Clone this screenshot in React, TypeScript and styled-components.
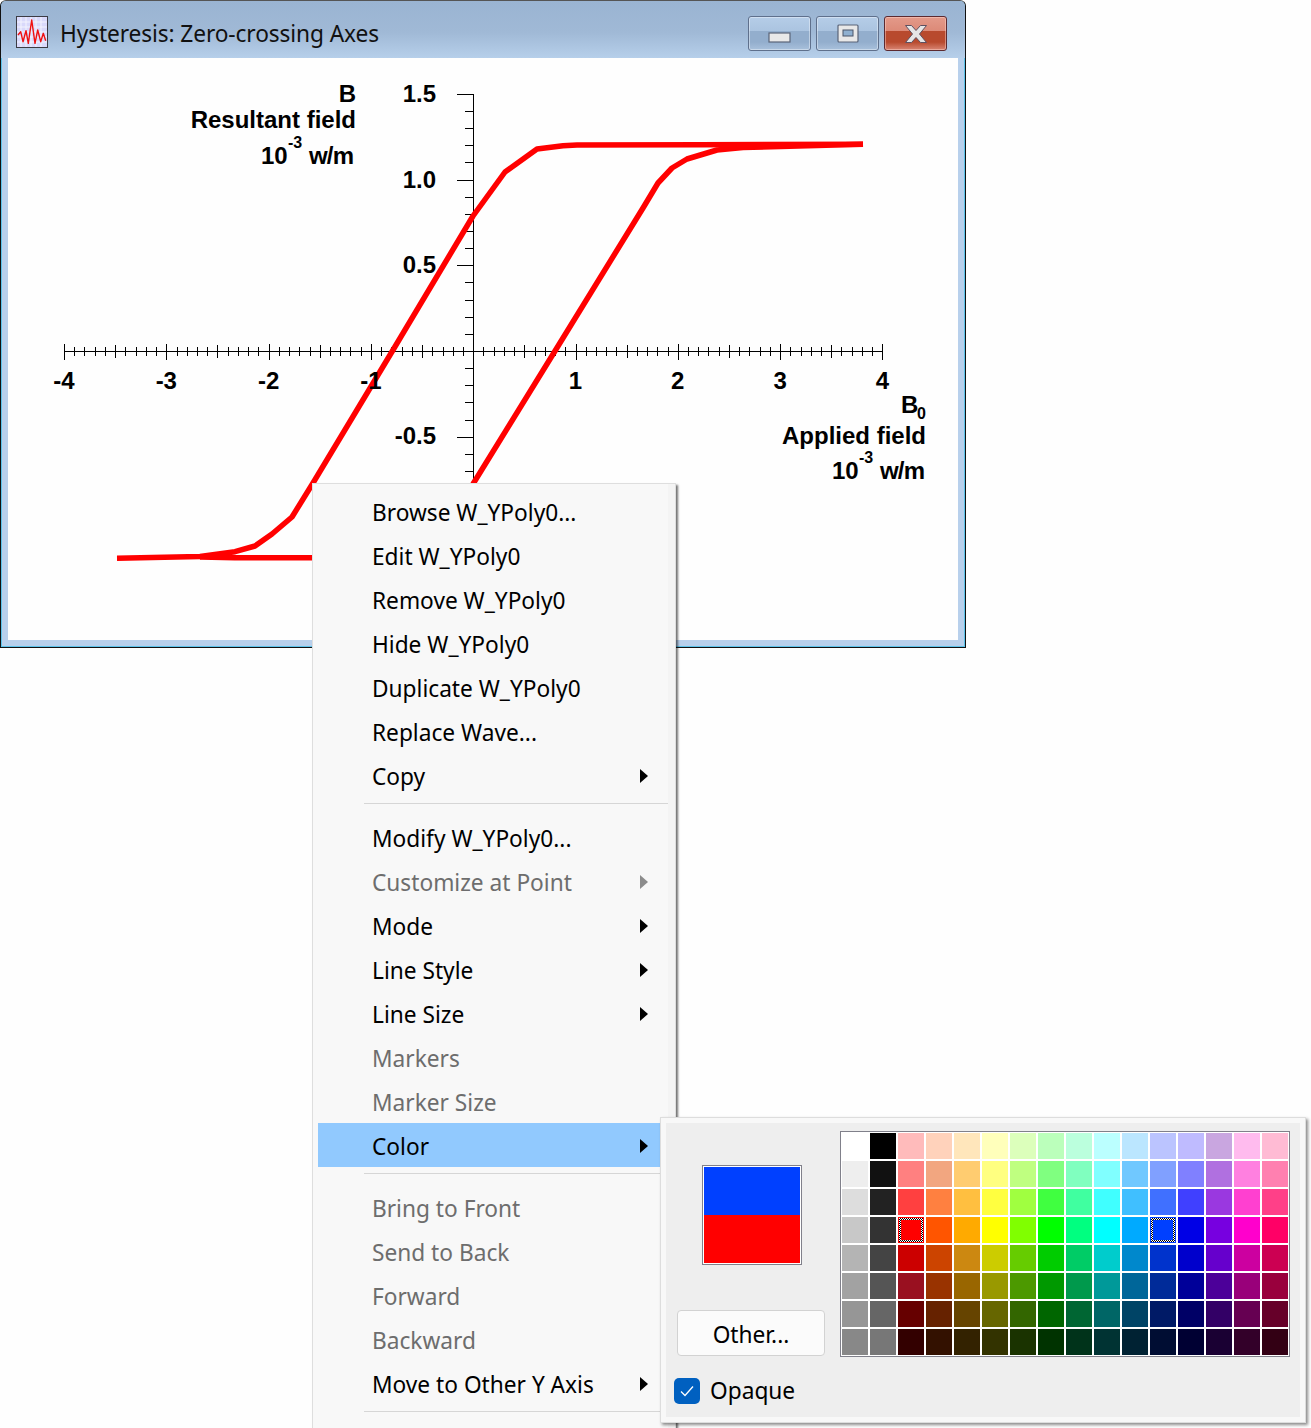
import styled, { createGlobalStyle } from 'styled-components';

const GlobalStyle = createGlobalStyle`
  html, body {
    margin: 0;
    padding: 0;
    background: #ffffff;
  }
`;

const uiFont = `"Noto Sans", "Open Sans", sans-serif`;

const Desktop = styled.div`
  position: relative;
  width: 1311px;
  height: 1428px;
  overflow: hidden;
  background: #fefefe;
  font-family: ${uiFont};
`;

/* graph window */
const Window = styled.div`
  position: absolute;
  left: 0;
  top: 0;
  width: 966px;
  height: 648px;
  box-sizing: border-box;
  display: flex;
  flex-direction: column;
  border: 1px solid #111;
  border-top-color: #555;
  border-radius: 6px 6px 0 0;
  box-shadow: inset 0 0 0 1px #5cc3ea;
  background: #b8d0ec;
  padding: 0 7px 7px;
`;

const TitleBar = styled.div`
  flex: none;
  height: 57px;
  box-sizing: border-box;
  margin: 0 -7px;
  padding: 15px 18px 0 15px;
  display: flex;
  align-items: flex-start;
  border-radius: 5px 5px 0 0;
  background: linear-gradient(#9ab4d2, #a0b9d6 55%, #b6cfea);
`;

const TitleIcon = styled.svg`
  flex: none;
  width: 32px;
  height: 32px;
  margin-right: 12px;
`;

const TitleText = styled.div`
  flex: 1;
  font-size: 22.7px;
  line-height: 35px;
  letter-spacing: -0.1px;
  color: #111;
  white-space: nowrap;
`;

const CaptionButtons = styled.div`
  display: flex;
  gap: 5px;
`;

const CaptionButton = styled.div<{ $close?: boolean }>`
  width: 63px;
  height: 35px;
  box-sizing: border-box;
  display: flex;
  align-items: center;
  justify-content: center;
  border: 1px solid ${p => (p.$close ? '#5c2a30' : '#5f708c')};
  border-radius: 3px;
  box-shadow: inset 0 0 0 1px ${p => (p.$close ? 'rgba(255,220,210,.45)' : 'rgba(235,242,250,.5)')};
  background: ${p =>
    p.$close
      ? 'linear-gradient(#e39a8a 0, #dc8a78 42%, #b84a2e 42%, #b84a2e 76%, #d98674 100%)'
      : 'linear-gradient(#b5cde8 0, #abc4e0 42%, #93aecd 42%, #93aecd 76%, #a9c1dc 100%)'};
`;

const Client = styled.div`
  flex: 1;
  min-height: 0;
  background: #fefefe;
`;

const Plot = styled.svg`
  display: block;
  width: 950px;
  height: 582px;
`;

const Label = styled.text`
  font-family: "Liberation Sans", Arial, sans-serif;
  font-weight: 700;
  font-size: 24px;
  fill: #000;
`;

const Exponent = styled(Label)`
  font-size: 16px;
`;

/* context menu */
const Menu = styled.div`
  position: absolute;
  left: 312px;
  top: 483px;
  width: 364px;
  height: 960px;
  box-sizing: border-box;
  padding: 5px 7px 0 5px;
  border: 1px solid #dedede;
  background: linear-gradient(90deg, #f8f8f8 calc(100% - 7px), #f4f4f4 0);
  box-shadow: 2px 2px 2px rgba(0, 0, 0, 0.55);
`;

const MenuItem = styled.div<{ $disabled?: boolean; $active?: boolean }>`
  height: 44px;
  display: flex;
  align-items: center;
  padding: 0 20px 0 54px;
  font-size: 22.7px;
  white-space: nowrap;
  color: ${p => (p.$disabled ? '#6d6d6d' : '#000')};
  background: ${p => (p.$active ? '#91c9fe' : 'transparent')};
`;

const MenuLabel = styled.span`
  flex: 1;
  position: relative;
  top: 1px;
`;

const Arrow = styled.span<{ $disabled?: boolean }>`
  width: 0;
  height: 0;
  margin-top: 1px;
  border-left: 8px solid ${p => (p.$disabled ? '#8c8c8c' : '#000')};
  border-top: 7px solid transparent;
  border-bottom: 7px solid transparent;
`;

const Separator = styled.div`
  height: 1px;
  margin: 6px 0 11px 46px;
  background: #d6d6d6;
`;

/* colour popup */
const ColorPopup = styled.div`
  position: absolute;
  left: 660px;
  top: 1117px;
  width: 646px;
  height: 306px;
  box-sizing: border-box;
  padding: 5px;
  border: 1px solid #dddddd;
  background: #f8f8f8;
  box-shadow: 2px 2px 3px rgba(0, 0, 0, 0.45);
`;

const PopupBody = styled.div`
  height: 100%;
  box-sizing: border-box;
  display: flex;
  padding: 8px 0 0 8px;
  background: #eeeeee;
`;

const PopupSide = styled.div`
  flex: none;
  width: 166px;
  display: flex;
  flex-direction: column;
  align-items: flex-start;
`;

const Preview = styled.div`
  width: 100px;
  height: 100px;
  box-sizing: border-box;
  margin: 34px 0 45px 28px;
  border: 1px solid #80808a;
  outline: 1px solid #fff;
  outline-offset: -2px;
  background: linear-gradient(#0040ff 0 50%, #ff0000 50% 100%);
`;

const OtherButton = styled.div`
  width: 148px;
  height: 46px;
  box-sizing: border-box;
  margin-left: 3px;
  padding-top: 2px;
  display: flex;
  align-items: center;
  justify-content: center;
  border: 1px solid #d2d2d2;
  border-radius: 4px;
  background: #fbfbfb;
  font-size: 22.7px;
  color: #000;
`;

const OpaqueRow = styled.div`
  display: flex;
  align-items: center;
  gap: 10px;
  margin-top: 19px;
  font-size: 22.7px;
  color: #000;
`;

const OpaqueLabel = styled.span`
  position: relative;
  top: 0;
`;

const CheckBox = styled.div`
  width: 26px;
  height: 26px;
  display: flex;
  align-items: center;
  justify-content: center;
  border-radius: 5px;
  background: #0060c0;
`;

const Palette = styled.div`
  flex: none;
  align-self: flex-start;
  box-sizing: border-box;
  width: 450px;
  height: 226px;
  padding: 1px 0 0 1px;
  display: grid;
  grid-template-columns: repeat(16, 26px);
  grid-auto-rows: 26px;
  gap: 2px;
  border: 1px solid #80808a;
  background: #fff;
`;

const Swatch = styled.div<{ $color: string; $selected?: boolean }>`
  position: relative;
  background: ${p => p.$color};

  ${p =>
    p.$selected &&
    `
    &::before {
      content: '';
      position: absolute;
      inset: 1px;
      background: repeating-conic-gradient(#000 0 25%, #fff 0 50%) 0 0 / 2px 2px;
    }
    &::after {
      content: '';
      position: absolute;
      inset: 3px;
      background: ${p.$color};
    }
  `}
`;

const palette = [
  ['#ffffff', '#000000', '#ffbbbb', '#ffd2bb', '#ffe6bb', '#ffffbb', '#dcffbb', '#bbffbb', '#bbffdd', '#bbffff', '#bbe6ff', '#bbc4ff', '#bfbbff', '#c9a6e0', '#ffbbee', '#ffbbd4'],
  ['#eeeeee', '#111111', '#ff8080', '#f2a680', '#ffcc70', '#ffff80', '#bfff80', '#80ff80', '#80ffbf', '#80ffff', '#70c8ff', '#80a0ff', '#8080ff', '#b070e0', '#ff80e0', '#ff80b0'],
  ['#dddddd', '#222222', '#ff4040', '#ff8040', '#ffbf40', '#ffff40', '#a0ff40', '#40ff40', '#40ffa0', '#40ffff', '#40bfff', '#4070ff', '#4040ff', '#9a38e0', '#ff40d0', '#ff4088'],
  ['#c8c8c8', '#333333', '#ff0000', '#ff5500', '#ffaa00', '#ffff00', '#80ff00', '#00ff00', '#00ff80', '#00ffff', '#00aaff', '#0040ff', '#0000e6', '#7700e0', '#ff00cc', '#ff0066'],
  ['#b4b4b4', '#444444', '#cc0000', '#cc4400', '#cc8811', '#cccc00', '#66cc00', '#00cc00', '#00cc66', '#00cccc', '#0088cc', '#0033cc', '#0000cc', '#6600cc', '#cc00a0', '#cc0052'],
  ['#a2a2a2', '#555555', '#991020', '#993300', '#996600', '#999900', '#4c9900', '#009900', '#00994c', '#009999', '#006699', '#002b99', '#000099', '#4c0099', '#99007a', '#99003d'],
  ['#969696', '#666666', '#660000', '#662200', '#664400', '#666600', '#336600', '#006600', '#006633', '#006666', '#004466', '#001a66', '#000066', '#330066', '#660052', '#660029'],
  ['#888888', '#777777', '#330000', '#331100', '#332200', '#333300', '#1a3300', '#003300', '#00331a', '#003333', '#002233', '#000d33', '#000033', '#1a0033', '#330029', '#330014'],
];

const isSelected = (row: number, col: number) => row === 3 && (col === 2 || col === 11);

type Entry = { label: string; disabled?: boolean; sub?: boolean; active?: boolean; sep?: boolean };

const menuEntries: Entry[] = [
  { label: 'Browse W_YPoly0...' },
  { label: 'Edit W_YPoly0' },
  { label: 'Remove W_YPoly0' },
  { label: 'Hide W_YPoly0' },
  { label: 'Duplicate W_YPoly0' },
  { label: 'Replace Wave...' },
  { label: 'Copy', sub: true, sep: true },
  { label: 'Modify W_YPoly0...' },
  { label: 'Customize at Point', disabled: true, sub: true },
  { label: 'Mode', sub: true },
  { label: 'Line Style', sub: true },
  { label: 'Line Size', sub: true },
  { label: 'Markers', disabled: true },
  { label: 'Marker Size', disabled: true },
  { label: 'Color', sub: true, active: true, sep: true },
  { label: 'Bring to Front', disabled: true },
  { label: 'Send to Back', disabled: true },
  { label: 'Forward', disabled: true },
  { label: 'Backward', disabled: true },
  { label: 'Move to Other Y Axis', sub: true, sep: true },
];

// axis positions, in page pixels
const axisX = 473;
const axisY = 351;
const xLeft = 64;
const xStep = 10.23;
const yStep = 17.14;

const upperBranch =
  '117,558.3 200,556.5 235,551.7 255,546 272,534 292,517 313,483 393,350 473,216 505,172 537,149 563,145.7 577,145 700,144.8 863,144.3';
const lowerBranch =
  '863,144.3 743,147.5 717,150 687,159 672,168 658,183 643,208 555,351 473,484 440,530 400,552 312,557.7 235,557.7 200,557';

const xLabels = [-4, -3, -2, -1, 1, 2, 3, 4];
const yLabels = [
  { text: '1.5', y: 101.5 },
  { text: '1.0', y: 187.5 },
  { text: '0.5', y: 272.5 },
  { text: '-0.5', y: 444 },
];

function PlotArea() {
  const xTicks = [];
  for (let i = 0; i <= 80; i++) {
    const x = Math.round(xLeft + i * xStep) + 0.5;
    const half = i % 10 === 0 ? 8 : i % 5 === 0 ? 6.5 : 4.5;
    xTicks.push(<line key={i} x1={x} x2={x} y1={axisY + 0.5 - half} y2={axisY + 0.5 + half} />);
  }
  const yTicks = [];
  for (let i = -14; i <= 15; i++) {
    const y = Math.round(axisY - i * yStep) + 0.5;
    const len = i % 5 === 0 ? 16 : 8;
    yTicks.push(<line key={i} x1={axisX - len} x2={axisX} y1={y} y2={y} />);
  }

  return (
    <Plot viewBox="8 58 950 582">
      <g stroke="#000" strokeWidth="1" shapeRendering="crispEdges">
        <line x1={xLeft} x2={xLeft + 80 * xStep} y1={axisY + 0.5} y2={axisY + 0.5} />
        <line x1={axisX + 0.5} x2={axisX + 0.5} y1={94} y2={600} />
        {xTicks}
        {yTicks}
      </g>
      <g fill="none" stroke="#ff0000" strokeWidth="5.5" strokeLinejoin="round">
        <polyline points={upperBranch} />
        <polyline points={lowerBranch} />
      </g>
      {xLabels.map(v => (
        <Label key={v} x={xLeft + (v + 4) * 10 * xStep} y={389} textAnchor="middle">
          {v}
        </Label>
      ))}
      {yLabels.map(l => (
        <Label key={l.text} x={436} y={l.y} textAnchor="end">
          {l.text}
        </Label>
      ))}
      <Label x={356} y={101.5} textAnchor="end">B</Label>
      <Label x={356} y={128} textAnchor="end">Resultant field</Label>
      <Label x={261} y={164}>10</Label>
      <Exponent x={288} y={148}>-3</Exponent>
      <Label x={354} y={164} textAnchor="end" textLength={45}>w/m</Label>

      <Label x={901} y={413}>B</Label>
      <Exponent x={917} y={419}>0</Exponent>
      <Label x={926} y={444} textAnchor="end">Applied field</Label>
      <Label x={832} y={479}>10</Label>
      <Exponent x={859} y={463}>-3</Exponent>
      <Label x={925} y={479} textAnchor="end" textLength={45}>w/m</Label>
    </Plot>
  );
}

export default function App() {
  return (
    <Desktop>
      <GlobalStyle />
      <Window>
        <TitleBar>
          <TitleIcon viewBox="0 0 32 32">
            <rect x="0.5" y="0.5" width="31" height="31" fill="#d9d9fb" stroke="#3c3c44" />
            <path
              d="M5 1v30M10 1v30M15 1v30M20 1v30M25 1v30M1 6h30M1 11h30M1 16h30M1 21h30M1 26h30"
              stroke="#fff"
              strokeWidth="1"
              opacity="0.7"
            />
            <polyline
              points="2,19 4.7,15.7 7,25.7 10,14.7 12.3,27.3 15.7,4 19,27.3 21.7,14 24.7,25.7 27.3,17.3 29.7,24.7"
              fill="none"
              stroke="#f01010"
              strokeWidth="1.4"
              strokeLinejoin="round"
            />
          </TitleIcon>
          <TitleText>Hysteresis: Zero-crossing Axes</TitleText>
          <CaptionButtons>
            <CaptionButton>
              <svg width="24" height="12" viewBox="0 0 24 12" style={{ marginTop: 9 }}>
                <rect x="1" y="1" width="21" height="9" fill="#e8e8e8" stroke="#5a6478" strokeWidth="1.2" />
              </svg>
            </CaptionButton>
            <CaptionButton>
              <svg width="22" height="19" viewBox="0 0 22 19" style={{ marginBottom: 1 }}>
                <rect x="1" y="1" width="20" height="17" rx="1" fill="#e8e8e8" stroke="#5a6478" strokeWidth="1.2" />
                <rect x="6" y="6" width="10" height="6" fill="#8fb0d0" stroke="#4a5568" />
              </svg>
            </CaptionButton>
            <CaptionButton $close>
              <svg width="24" height="20" viewBox="0 0 24 20">
                <path
                  d="M1.5 1.5h6L12 6.5l4.500-5h6L15.500 10l7 8.500h-6L12 13.500l-4.500 5h-6L8.500 10z"
                  fill="#e6e6e6"
                  stroke="#5e5060"
                />
              </svg>
            </CaptionButton>
          </CaptionButtons>
        </TitleBar>
        <Client>
          <PlotArea />
        </Client>
      </Window>

      <Menu>
        {menuEntries.map(entry => (
          <div key={entry.label}>
            <MenuItem $disabled={entry.disabled} $active={entry.active}>
              <MenuLabel>{entry.label}</MenuLabel>
              {entry.sub && <Arrow $disabled={entry.disabled} />}
            </MenuItem>
            {entry.sep && <Separator />}
          </div>
        ))}
      </Menu>

      <ColorPopup>
        <PopupBody>
          <PopupSide>
            <Preview />
            <OtherButton>Other...</OtherButton>
            <OpaqueRow>
              <CheckBox>
                <svg width="16" height="14" viewBox="0 0 16 14">
                  <path d="M2 7.500l4 4 8-9" fill="none" stroke="#fff" strokeWidth="1.3" />
                </svg>
              </CheckBox>
              <OpaqueLabel>Opaque</OpaqueLabel>
            </OpaqueRow>
          </PopupSide>
          <Palette>
            {palette.map((row, r) =>
              row.map((color, c) => <Swatch key={`${r}-${c}`} $color={color} $selected={isSelected(r, c)} />)
            )}
          </Palette>
        </PopupBody>
      </ColorPopup>
    </Desktop>
  );
}
